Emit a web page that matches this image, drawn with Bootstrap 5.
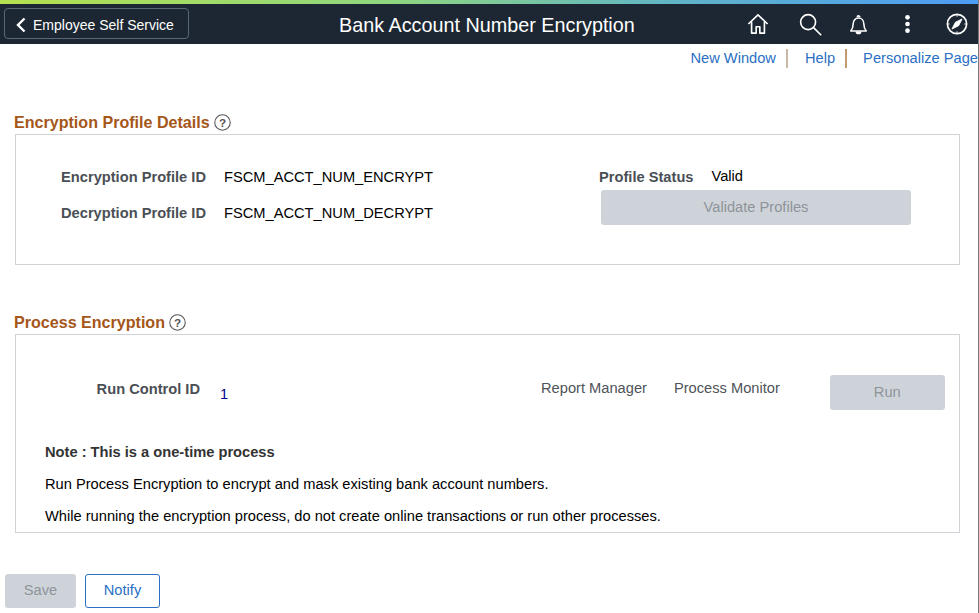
<!DOCTYPE html>
<html lang="en">
<head>
    <meta charset="UTF-8">
    <meta name="viewport" content="width=device-width, initial-scale=1.0">
    <title>Bank Account Number Encryption</title>
    <link href="https://cdn.jsdelivr.net/npm/bootstrap@5.3.0/dist/css/bootstrap.min.css" rel="stylesheet">
    <style>
        html, body { height: 613px; overflow: hidden; }
        body { font-family: "Liberation Sans", Arial, sans-serif; font-size: 14.67px; color: #000; background: #fff; border-right: 1px solid #777; }
        .top-strip { height: 4px; background: linear-gradient(90deg, #b5e04f 0%, #8fd67f 40%, #5fb3c9 70%, #4d9cf5 100%); }
        .ps-header { height: 40px; background: #1c2733; padding-left: 4px; padding-right: 10px; }
        .back-btn { width: 185px; height: 31px; border: 1px solid #5a6774; border-radius: 4px; color: #fff; font-size: 14px; background: transparent; padding: 3px 0 0 11px; margin-top: -1px; }
        .back-btn svg { margin-right: 7px; }
        .ps-title { color: #fff; font-size: 19.8px; left: 339px; top: 9px; line-height: 24px; }
        .header-icons svg { display: block; }
        .ico-search { margin-left: 30px; }
        .ico-bell { margin-left: 27px; }
        .ico-dots { margin-left: 37px; }
        .ico-compass { margin-left: 36px; }
        .top-links { height: 28px; font-size: 14.67px; line-height: 24px; white-space: nowrap; }
        .top-links a { color: #2b6fc4; text-decoration: none; }
        .link-sep { width: 2px; height: 19px; background: #c9b8a5; margin: 0 17px 0 10px; }
        .link-sep.second { margin-right: 16px; background: #c49a70; }
        .sect-title { color: #a5561a; font-size: 16.08px; font-weight: 700; line-height: 20px; margin-left: 14px; }
        .help-mark { width: 17px; height: 17px; margin-left: 4px; }
        .sect-box { margin-left: 15px; width: 945px; border: 1px solid #cfd3d8; }
        .box-one { height: 131px; margin-top: 2px; padding-top: 30px; }
        .box-two { height: 199px; margin-top: 2px; padding-top: 40px; }
        .sect-one-title { margin-top: 40px; }
        .sect-two-title { margin-top: 47px; }
        .fld-label { font-weight: 700; color: #4a4f55; text-align: right; line-height: 24px; }
        .fld-val { line-height: 24px; }
        .status-val { line-height: 22px; }
        .id-label { width: 190px; margin-right: 18px; }
        .id-row { height: 36px; }
        .status-col { margin-left: 166px; width: 312px; }
        .status-val { margin-left: 18px; }
        .btn-off { background: #ced3d9; color: #8e939a; border: 0; border-radius: 3px; font-size: 14.67px; opacity: 1; }
        .validate-btn { display: block; width: 310px; height: 35px; margin-left: 2px; margin-top: 1px; padding-bottom: 2px; }
        .run-label { width: 184px; margin-right: 20px; padding-top: 2px; }
        .run-val { color: #00008b; width: 321px; padding-top: 8px; }
        .plain-link { color: #4f5359; line-height: 24px; padding-top: 1px; text-decoration: none; }
        .report-link { margin-right: 27px; }
        .run-row { height: 35px; }
        .run-btn { width: 115px; height: 35px; margin-left: 50px; padding-bottom: 2px; }
        .note-block { margin: 33px 0 0 29px; }
        .note-block p { margin: 0 0 14px; line-height: 18px; }
        .note-head { font-weight: 700; color: #333; }
        .foot-row { margin: 41px 0 0 5px; gap: 9px; }
        .save-btn { width: 71px; height: 34px; padding: 0 0 2px; }
        .notify-btn { width: 75px; height: 34px; padding: 0 0 2px; font-size: 14.67px; color: #2b6fc4; border: 1px solid #2b6fc4; border-radius: 3px; background: #fff; }
    </style>
</head>
<body>
    <div class="top-strip"></div>

    <!-- Header -->
    <header class="ps-header d-flex align-items-center justify-content-between position-relative">
        <button type="button" class="back-btn d-flex align-items-center">
            <svg width="10" height="16" viewBox="0 0 10 16" fill="none" stroke="#fff" stroke-width="2.4"><path d="M8.5 1.500 2 8l6.500 6.500"/></svg>
            Employee Self Service
        </button>
        <div class="ps-title position-absolute">Bank Account Number Encryption</div>
        <div class="header-icons d-flex align-items-center">
            <svg width="22" height="22" viewBox="0 0 24 24" fill="none" stroke="#fff" stroke-width="1.800" stroke-linejoin="round"><path d="M1.500 12 12 2l10.500 10"/><path d="M5 9.500V22h5v-7h4v7h5V9.500"/></svg>
            <svg class="ico-search" width="23" height="23" viewBox="0 0 24 24" fill="none" stroke="#fff" stroke-width="1.700"><circle cx="9.500" cy="9.500" r="7.800"/><path d="m15.200 15.200 8 8"/></svg>
            <svg class="ico-bell" width="19" height="23" viewBox="0 0 22 24" fill="none" stroke="#fff" stroke-width="1.800" stroke-linejoin="round"><path d="M2 19.500c2-2 2.800-3.500 2.800-8 0-4 2.600-7 6.200-7s6.200 3 6.200 7c0 4.500.8 6 2.800 8z"/><path d="M9.500 3.500a1.500 1.500 0 0 1 3 0"/><path d="M8.500 20a2.500 2.500 0 0 0 5 0" fill="#fff"/></svg>
            <svg class="ico-dots" width="5" height="20" viewBox="0 0 6 22" fill="#fff"><circle cx="3" cy="3" r="2.800"/><circle cx="3" cy="11" r="2.800"/><circle cx="3" cy="19" r="2.800"/></svg>
            <svg class="ico-compass" width="22" height="22" viewBox="0 0 24 24" fill="none" stroke="#fff" stroke-width="1.800"><circle cx="12" cy="12" r="10.500"/><path d="M17.500 6.500 13.800 13.800 6.500 17.500l3.700-7.300z" fill="#fff" stroke-width="1"/><path d="M12 2v2M12 20v2M2 12h2M20 12h2" stroke-width="1"/></svg>
        </div>
    </header>

    <!-- Page links -->
    <nav class="top-links d-flex justify-content-end align-items-center">
        <a href="#">New Window</a><span class="link-sep"></span>
        <a href="#">Help</a><span class="link-sep second"></span>
        <a href="#">Personalize Page</a>
    </nav>

    <!-- Encryption Profile Details -->
    <h2 class="sect-title sect-one-title d-flex align-items-center mb-0">Encryption Profile Details
        <svg class="help-mark" viewBox="0 0 16 16" fill="none" stroke="#555"><circle cx="8" cy="8" r="7.300"/><text x="8" y="12" text-anchor="middle" font-family="Liberation Sans" font-size="11" fill="#555" stroke="none">?</text></svg>
    </h2>
    <section class="sect-box box-one d-flex">
        <div>
            <div class="id-row d-flex">
                <div class="fld-label id-label">Encryption Profile ID</div>
                <div class="fld-val">FSCM_ACCT_NUM_ENCRYPT</div>
            </div>
            <div class="id-row d-flex">
                <div class="fld-label id-label">Decryption Profile ID</div>
                <div class="fld-val">FSCM_ACCT_NUM_DECRYPT</div>
            </div>
        </div>
        <div class="status-col">
            <div class="d-flex">
                <div class="fld-label">Profile Status</div>
                <div class="fld-val status-val">Valid</div>
            </div>
            <button type="button" class="btn-off validate-btn" disabled>Validate Profiles</button>
        </div>
    </section>

    <!-- Process Encryption -->
    <h2 class="sect-title sect-two-title d-flex align-items-center mb-0">Process Encryption
        <svg class="help-mark" viewBox="0 0 16 16" fill="none" stroke="#555"><circle cx="8" cy="8" r="7.300"/><text x="8" y="12" text-anchor="middle" font-family="Liberation Sans" font-size="11" fill="#555" stroke="none">?</text></svg>
    </h2>
    <section class="sect-box box-two">
        <div class="run-row d-flex">
            <div class="fld-label run-label">Run Control ID</div>
            <div class="run-val">1</div>
            <a href="#" class="plain-link report-link">Report Manager</a>
            <a href="#" class="plain-link">Process Monitor</a>
            <button type="button" class="btn-off run-btn" disabled>Run</button>
        </div>
        <div class="note-block">
            <p class="note-head">Note : This is a one-time process</p>
            <p>Run Process Encryption to encrypt and mask existing bank account numbers.</p>
            <p>While running the encryption process, do not create online transactions or run other processes.</p>
        </div>
    </section>

    <!-- Footer buttons -->
    <div class="foot-row d-flex">
        <button type="button" class="btn-off save-btn" disabled>Save</button>
        <button type="button" class="notify-btn">Notify</button>
    </div>

    <script src="https://cdn.jsdelivr.net/npm/bootstrap@5.3.0/dist/js/bootstrap.bundle.min.js"></script>
</body>
</html>
